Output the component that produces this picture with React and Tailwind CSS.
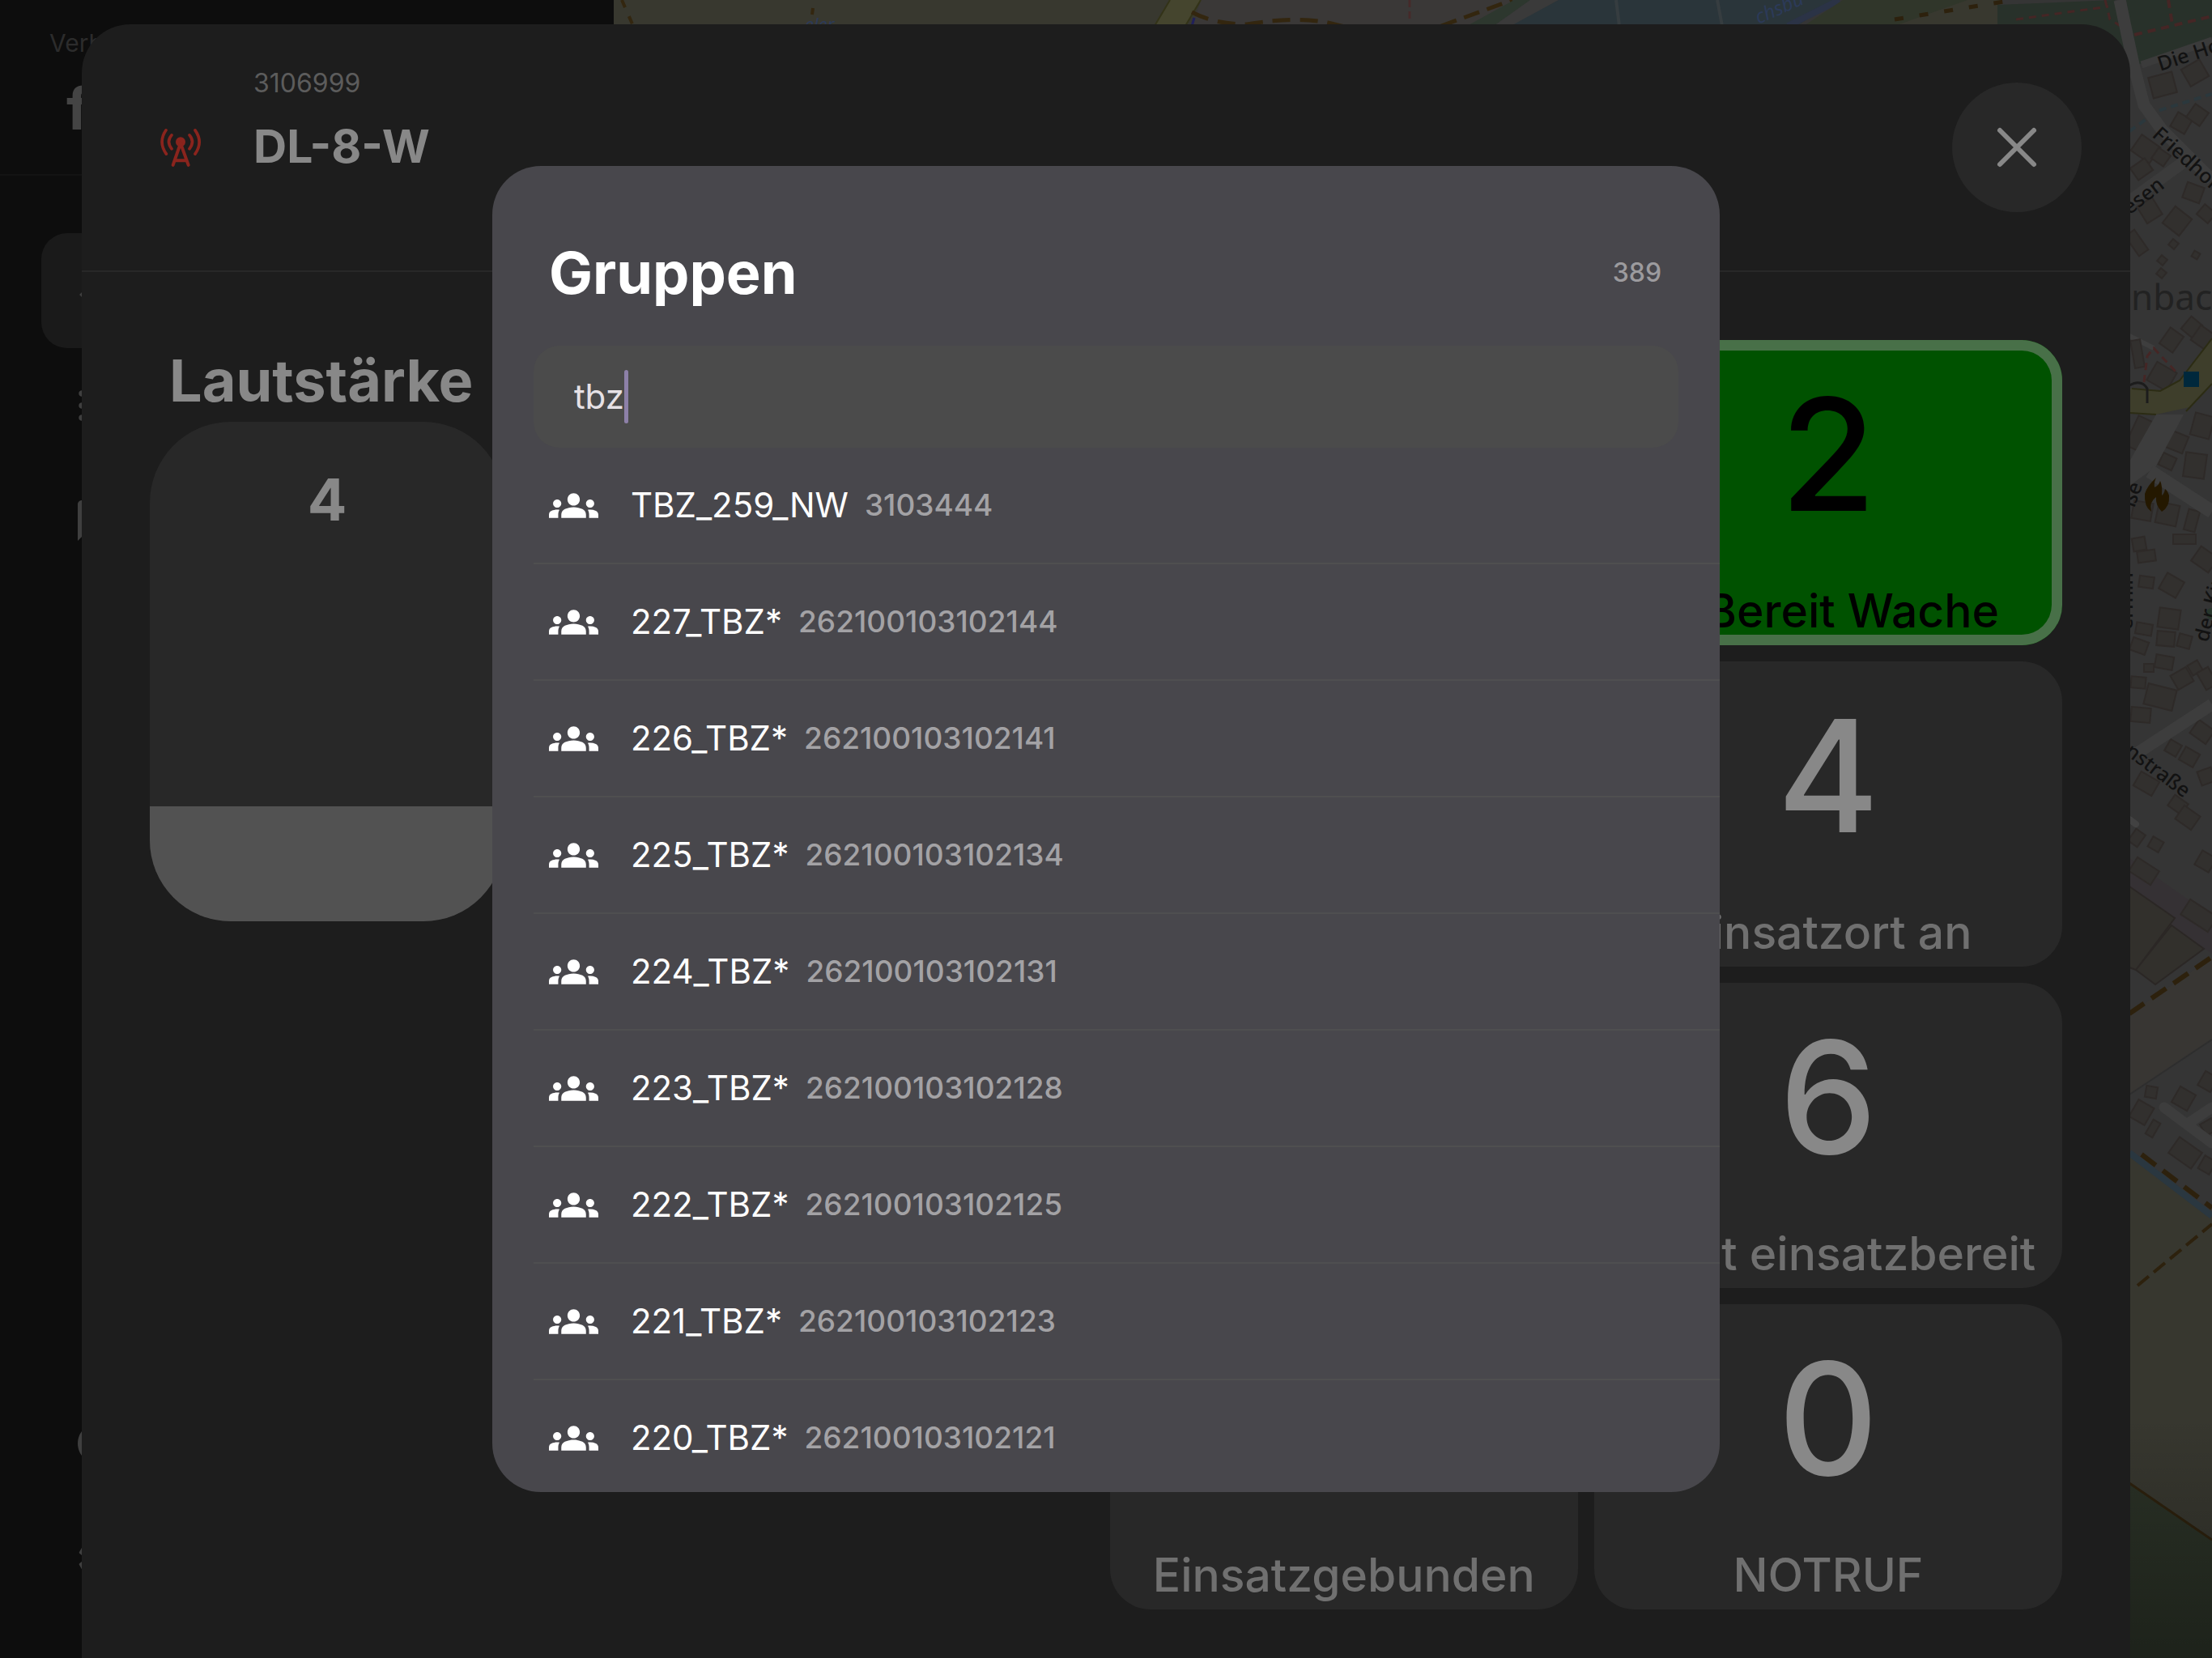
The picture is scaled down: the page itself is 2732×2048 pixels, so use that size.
import React from "react";
import { MdGroups, MdChatBubbleOutline, MdSettings, MdCircle, MdKeyboardArrowUp, MdFormatListBulleted } from "react-icons/md";

const groups = [
  ["TBZ_259_NW", "3103444"],
  ["227_TBZ*", "262100103102144"],
  ["226_TBZ*", "262100103102141"],
  ["225_TBZ*", "262100103102134"],
  ["224_TBZ*", "262100103102131"],
  ["223_TBZ*", "262100103102128"],
  ["222_TBZ*", "262100103102125"],
  ["221_TBZ*", "262100103102123"],
  ["220_TBZ*", "262100103102121"],
];

// x, y, width, height, rotation of each building footprint
const buildings = [
  [2656, 92, 30, 26, -15], [2698, 78, 26, 24, -30], [2636, 172, 28, 24, 35], [2660, 186, 18, 16, 35],
  [2684, 142, 20, 20, 30], [2704, 132, 20, 20, 35], [2634, 200, 22, 18, -35], [2644, 248, 22, 24, -32],
  [2676, 260, 26, 26, 38], [2698, 228, 22, 20, 20], [2716, 256, 18, 16, 40], [2680, 297, 9, 9, 40],
  [2708, 311, 8, 8, 30], [2666, 317, 9, 9, 40], [2665, 333, 9, 9, 40], [2632, 285, 14, 30, -35],
  [2672, 408, 20, 24, 35], [2698, 394, 18, 20, 40], [2710, 406, 22, 22, 35], [2634, 420, 12, 34, -10],
  [2656, 452, 28, 26, 30], [2632, 516, 22, 40, 25], [2678, 535, 22, 22, 22], [2708, 512, 24, 28, 15],
  [2698, 560, 26, 30, 8], [2668, 562, 18, 16, 25], [2634, 620, 24, 22, 10], [2664, 622, 26, 26, 12],
  [2700, 630, 14, 26, 15], [2684, 660, 28, 12, 0], [2634, 664, 16, 16, -10], [2640, 680, 22, 14, -8],
  [2710, 680, 26, 22, 35], [2642, 712, 18, 14, 8], [2670, 712, 24, 22, 30], [2666, 752, 26, 24, 8],
  [2664, 780, 22, 18, 5], [2690, 784, 16, 16, 15], [2638, 770, 20, 14, 10], [2632, 790, 20, 16, 20],
  [2662, 810, 22, 16, 10], [2648, 820, 12, 10, 0], [2632, 836, 18, 14, 5], [2684, 828, 22, 20, -30],
  [2704, 818, 14, 14, -30], [2718, 826, 16, 24, -30], [2650, 848, 36, 26, 14], [2632, 874, 24, 18, 5],
  [2676, 916, 16, 16, 30], [2694, 926, 20, 18, 30], [2708, 894, 24, 20, 35], [2716, 950, 18, 18, -20],
  [2638, 958, 26, 20, 30], [2680, 986, 20, 16, 35], [2690, 1000, 24, 20, 35], [2632, 1026, 14, 18, 35],
  [2655, 1036, 15, 14, 30], [2632, 1066, 32, 20, 33], [2714, 1054, 20, 20, 30], [2696, 1120, 40, 22, 33],
  [2634, 1362, 22, 24, 30], [2650, 1342, 14, 14, 10], [2654, 1384, 10, 20, 30], [2686, 1346, 22, 22, 30],
  [2718, 1326, 18, 20, 30], [2720, 1384, 16, 16, -30], [2682, 1412, 34, 24, 35], [2718, 1430, 16, 18, 30],
];

function CityMap() {
  return (
    <svg
      className="h-full min-w-0 flex-1"
      viewBox="758 0 1974 2048"
      preserveAspectRatio="xMaxYMin slice"
      fontFamily="'Noto Sans', sans-serif"
      aria-hidden="true"
    >
      <defs>
        <linearGradient id="shade" x1="0" y1="0" x2="0" y2="1">
          <stop offset="0" stopColor="#000" stopOpacity="0" />
          <stop offset="1" stopColor="#000" stopOpacity="0.3" />
        </linearGradient>
      </defs>
      <rect x="758" width="1974" height="2048" fill="#353535" />

      {/* northern edge: fields, lake and park */}
      <path d="M758 0H1483L1464 60H758Z" fill="#38382f" />
      <path d="M1483 0H1870L1810 60H1464Z" fill="#3a3837" />
      <path d="M1445 0H1483L1464 32H1426Z" fill="#45452e" />
      <path d="M1445 0L1426 32M1483 0L1464 32" stroke="#333318" strokeWidth="2" />
      <path d="M1475 22L1472 32" stroke="#20205a" strokeWidth="3" />
      <path d="M1472 15Q1500 30 1540 30Q1600 20 1640 28L1690 40" fill="none" stroke="#33260f" strokeWidth="5" strokeDasharray="22 12" />
      <path d="M1780 32L1868 0" stroke="#33260f" strokeWidth="5" strokeDasharray="20 10" />
      <path d="M1870 0H1890L1845 32H1812Z" fill="#2d372e" />
      <path d="M1890 0H1925L1868 32H1845Z" fill="#3a3a3a" />
      <path d="M1925 0H2265L2220 32H1866Z" fill="#2a353a" />
      <path d="M1996 0L2000 32M2121 0L2127 32" stroke="#363d40" strokeWidth="4" />
      <path d="M2208 32L2272 0" stroke="#2b3346" strokeWidth="8" />
      <path d="M2276 0H2460V32H2228Z" fill="#30362a" />
      <path d="M2430 0H2470V32H2340Z" fill="#38382f" />
      <path d="M2340 24L2475 2" stroke="#2d210d" strokeWidth="5" strokeDasharray="11 20" />
      <path d="M2467 6L2612 0L2640 60H2467Z" fill="#28312a" />
      <path d="M2490 24L2604 8M2600 0L2606 24L2622 34" fill="none" stroke="#452625" strokeWidth="3" strokeDasharray="9 7" />
      <path d="M1741 0V26" stroke="#452a2a" strokeWidth="3" strokeDasharray="9 5" />
      <path d="M768 0L782 32M1004 10L1003 18" stroke="#33260f" strokeWidth="4" strokeDasharray="10 12" />
      <text x="2172" y="30" fontSize="24" fontStyle="italic" fill="#2c3a58" transform="rotate(-24 2172 30)">chsbu</text>
      <text x="994" y="38" fontSize="22" fontStyle="italic" fill="#2c3a58">eler</text>

      {/* park and streets along the eastern edge */}
      <path d="M2626 0H2732V46L2640 80Z" fill="#28312a" />
      <path d="M2636 43L2732 20M2678 0L2683 30" stroke="#452625" strokeWidth="4" strokeDasharray="10 7" />
      <path d="M2630 162L2665 137L2732 116" fill="none" stroke="#2b383d" strokeWidth="4" strokeDasharray="9 6" />
      <path d="M2645 80L2732 50" stroke="#3b3b3b" strokeWidth="9" />
      <path d="M2618 0L2636 84L2648 130L2670 160L2732 222" fill="none" stroke="#3d3d3d" strokeWidth="15" />
      <path d="M2628 250L2700 198" stroke="#3b3b3b" strokeWidth="15" />
      <path d="M2630 415L2660 430" stroke="#3e3e3e" strokeWidth="6" />

      {/* industrial block, meadow and brook */}
      <path d="M2630 1060L2732 1132V1178L2690 1150L2630 1105Z" fill="#353134" />
      <path d="M2630 1095L2686 1134L2638 1198L2630 1195ZM2682 1143L2722 1172L2662 1216L2638 1198Z" fill="#32302c" stroke="#2b2725" strokeWidth="2" />
      <path d="M2630 1252L2732 1183V1284L2630 1352Z" fill="#383633" />
      <path d="M2630 1424L2732 1500V1900L2630 1832Z" fill="#37372f" />
      <path d="M2630 1832L2732 1902V2048H2630Z" fill="#2a3126" />
      <path d="M2630 1352L2732 1284" stroke="#2e2e2e" strokeWidth="2" />

      {buildings.map(([x, y, w, h, r]) => (
        <rect
          key={`${x}-${y}`}
          x={x}
          y={y}
          width={w}
          height={h}
          transform={`rotate(${r} ${x + w / 2} ${y + h / 2})`}
          fill="#32302e"
          stroke="#2e2a28"
          strokeWidth="2"
        />
      ))}

      <path d="M2732 418L2692 470L2668 483L2630 480V510L2663 512L2704 503L2720 488L2732 474Z" fill="#3e3e2b" />
      <path d="M2732 418L2692 470L2668 483L2633 480M2630 510L2663 512M2700 508L2732 474" fill="none" stroke="#2c2c14" strokeWidth="2" />
      <path d="M2663 512H2697L2662 577L2630 600V570Z" fill="#3d3d3d" />
      <path d="M2655 582L2732 632" stroke="#3d3d3d" strokeWidth="17" />
      <path d="M2640 930L2732 870" stroke="#3d3d3d" strokeWidth="15" />
      <path d="M2630 1012L2638 1018" stroke="#424242" strokeWidth="8" strokeLinecap="round" />
      <path d="M2673 1368L2732 1412M2702 1388L2732 1368" stroke="#3d3d3d" strokeWidth="13" strokeLinecap="round" />
      <path d="M2630 476Q2645 468 2652 480V498" fill="none" stroke="#1c1c1c" strokeWidth="3" />
      <path d="M2648 472L2652 440L2660 430L2690 462" fill="none" stroke="#452625" strokeWidth="3" strokeDasharray="9 6" />
      <rect x="2697" y="459" width="19" height="19" fill="#00283c" />
      <path d="M2663 590Q2652 600 2649 610Q2648 626 2657 632Q2654 620 2663 614Q2662 624 2670 632Q2680 626 2679 612Q2677 606 2674 604Q2673 610 2670 612Q2671 600 2668 594Q2666 600 2661 602Q2660 596 2663 590Z" fill="#241800" />
      <circle cx="2732" cy="758" r="7" fill="#28372c" />

      <path d="M2630 1252L2732 1182M2645 1426L2732 1492" stroke="#2d210d" strokeWidth="6" strokeDasharray="22 11" />
      <path d="M2630 1424L2732 1502" stroke="#2a3740" strokeWidth="8" />
      <path d="M2640 1588L2732 1512" stroke="#2d210d" strokeWidth="4" strokeDasharray="18 8" />
      <path d="M2630 1832L2732 1902" stroke="#2d210d" strokeWidth="3" />

      <g fill="#121212" fontSize="25" fontWeight="500">
        <text x="2668" y="88" transform="rotate(-18 2668 88)">Die Ho</text>
        <text x="2657" y="168" transform="rotate(42 2657 168)">Friedhof</text>
        <text x="2630" y="266" transform="rotate(-38 2630 266)">esen</text>
        <text x="2612" y="922" transform="rotate(37 2612 922)">enstraße</text>
        <text x="2727" y="794" transform="rotate(-76 2727 794)">der Kir</text>
        <text x="2634" y="778" transform="rotate(-90 2634 778)">ermin</text>
        <text x="2636" y="628" transform="rotate(-70 2636 628)">ße</text>
      </g>
      <text x="2632" y="383" fontSize="44" fill="#222">nbach</text>

      <rect x="758" y="1750" width="1974" height="298" fill="url(#shade)" />
    </svg>
  );
}

function Sidebar() {
  return (
    <aside className="flex w-[758px] shrink-0 flex-col bg-[#0d0d0d] text-[#3f3f3f]">
      <header className="flex h-[217px] flex-col border-b-2 border-[#131313] pt-8">
        <p className="pl-[61px] text-[30px] leading-[42px] text-[#2c2c2c]">Verbunden</p>
        <h2 className="mt-4 pl-[82px] text-[72px] leading-[88px] font-bold text-[#444]">f</h2>
      </header>
      <nav className="flex flex-1 flex-col pl-[51px]">
        <a href="#status" aria-label="Status" className="mt-[71px] flex h-[142px] items-center rounded-l-[32px] bg-[#1a1a1a] pl-8">
          <MdKeyboardArrowUp className="size-[60px]" />
        </a>
        <a href="#liste" aria-label="Liste" className="flex h-[142px] items-center pl-10">
          <MdFormatListBulleted className="size-[60px]" />
        </a>
        <a href="#nachrichten" aria-label="Nachrichten" className="flex h-[142px] items-center pl-10">
          <MdChatBubbleOutline className="size-[60px]" />
        </a>
        <span className="flex-1" />
        <a href="#konto" aria-label="Konto" className="flex h-[142px] items-center pl-10">
          <MdCircle className="size-[60px]" />
        </a>
        <a href="#einstellungen" aria-label="Einstellungen" className="mb-[52px] flex h-[142px] items-center pl-10">
          <MdSettings className="size-[60px]" />
        </a>
      </nav>
    </aside>
  );
}

function TowerIcon() {
  return (
    <svg className="h-[49px] w-[52px]" viewBox="50 60 156 146" fill="none" stroke="#8a241d" strokeWidth="11" strokeLinecap="round" strokeLinejoin="round" aria-hidden="true">
      <circle cx="128" cy="111" r="18" fill="#8a241d" stroke="none" />
      <path d="M100 197L128 116L157 197M108 180H149" strokeWidth="12" />
      <path d="M95 86Q74 110 95 137M74 68Q44 112 75 156M161 86Q182 110 161 137M182 68Q213 112 182 156" />
    </svg>
  );
}

function StatusTile({ digit, label, className }) {
  return (
    <button type="button" className={`flex h-[377px] flex-col items-center justify-between rounded-[50px] pt-[45px] pb-2.5 ${className}`}>
      <span className="h-[192px] text-[192px] leading-[192px] font-medium">{digit}</span>
      <span className="text-[57px] leading-[64px] font-medium whitespace-nowrap opacity-75">{label}</span>
    </button>
  );
}

function RadioSheet() {
  const plain = "bg-[#282828] text-[#888]";
  return (
    <section className="absolute inset-x-[101px] top-[30px] bottom-0 flex flex-col rounded-t-[60px] bg-[#1d1d1d] text-[#888]">
      <header className="flex h-[306px] shrink-0 items-center border-b-2 border-[#282828] pr-[60px] pl-24">
        <TowerIcon />
        <div className="flex flex-1 flex-col self-start pt-[53px] pl-16">
          <p className="text-[32px] leading-[40px] text-[#5c5c5c]">3106999</p>
          <h1 className="mt-[18px] text-[57px] leading-[80px] font-bold">DL-8-W</h1>
        </div>
        <button type="button" aria-label="Schließen" className="flex size-[160px] items-center justify-center rounded-full bg-[#282828]">
          <svg className="size-[52px]" viewBox="0 0 52 52" stroke="currentColor" strokeWidth="6" strokeLinecap="round" aria-hidden="true">
            <path d="M5 5L47 47M47 5L5 47" />
          </svg>
        </button>
      </header>
      <div className="flex flex-1 justify-between px-[84px] pt-[84px]">
        <section className="pt-2">
          <h2 className="pl-6 text-[72px] leading-[84px] font-bold">Lautstärke</h2>
          <div className="mt-[9px] flex h-[617px] w-[438px] flex-col justify-between overflow-hidden rounded-[100px] bg-[#282828]">
            <span className="pt-[54px] text-center text-[72px] leading-[84px] font-bold">4</span>
            <span className="h-[142px] bg-[#525252]" />
          </div>
        </section>
        <div className="grid w-[49.8%] auto-rows-min grid-cols-2 gap-5">
          <StatusTile digit="2" label="E-Bereit Wache" className="col-start-2 bg-[#005200] text-black ring-[13px] ring-[#487048] ring-inset [&>span]:opacity-100" />
          <StatusTile digit="4" label="Einsatzort an" className={`col-start-2 ${plain}`} />
          <StatusTile digit="6" label="Nicht einsatzbereit" className={`col-start-2 ${plain}`} />
          <StatusTile label="Einsatzgebunden" className={`col-start-1 ${plain}`} />
          <StatusTile digit="0" label="NOTRUF" className={`col-start-2 ${plain}`} />
        </div>
      </div>
    </section>
  );
}

function GroupDialog() {
  return (
    <div className="absolute inset-0 flex justify-center py-[205px]">
      <div role="dialog" aria-labelledby="groups-title" className="flex w-[55.5%] flex-col overflow-hidden rounded-[60px] bg-[#48474c] text-white">
        <header className="flex items-center justify-between pt-20 pr-[72px] pb-[38px] pl-[70px]">
          <h2 id="groups-title" className="text-[72px] leading-[104px] font-bold">Gruppen</h2>
          <span className="text-[32px] leading-[40px] font-medium text-[#9c9b9e]">389</span>
        </header>
        <label className="mx-[51px] flex h-[126px] shrink-0 items-center rounded-[32px] bg-[#4b4b4b] pl-[50px]">
          <input type="text" defaultValue="tbz" aria-label="Gruppe suchen" className="field-sizing-content bg-transparent text-[42px] leading-[64px] text-[#e6e1e5] outline-none" />
          <span className="h-[66px] w-[5px] rounded-full bg-[#8d80a8]" />
        </label>
        <ul className="min-h-0 flex-1 overflow-hidden pl-[51px]">
          {groups.map(([name, id]) => (
            <li key={id} className="border-b-2 border-[#4f4f50]">
              <button type="button" className="flex h-[142px] w-full items-center pl-[19px]">
                <MdGroups className="size-[61px]" />
                <span className="pl-10 text-[42px] leading-[48px]">{name}</span>
                <span className="pl-5 text-[37px] leading-[48px] font-medium text-[#a3a2a5]">{id}</span>
              </button>
            </li>
          ))}
        </ul>
      </div>
    </div>
  );
}

export default function App() {
  return (
    <main className="relative flex h-screen w-full overflow-hidden bg-[#0d0d0d] font-['Inter',sans-serif]">
      <Sidebar />
      <CityMap />
      <RadioSheet />
      <GroupDialog />
    </main>
  );
}
